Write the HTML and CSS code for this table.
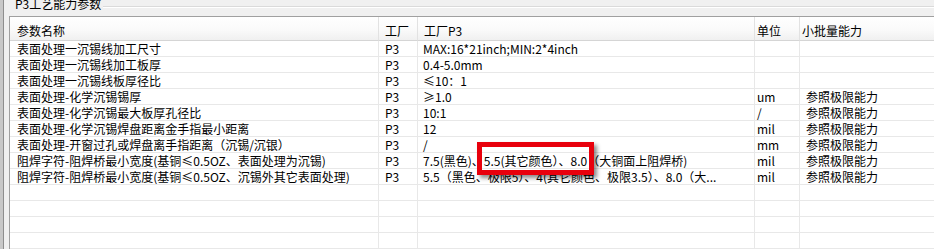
FILE: index.html
```html
<!DOCTYPE html>
<html lang="zh-CN">
<head>
<meta charset="utf-8">
<title>P3工艺能力参数</title>
<link rel="stylesheet" href="styles.css">
</head>
<body>
<div class="window">
  <div class="edge"></div>
  <div class="panel">
    <div class="legend">
      <span class="legend-text">P3工艺能力参数</span>
      <span class="legend-line"></span>
    </div>
    <div class="table-box">
      <div class="grid">
        <div class="hd c1">参数名称</div>
        <div class="hd c2">工厂</div>
        <div class="hd c3">工厂P3</div>
        <div class="hd c4">单位</div>
        <div class="hd c5">小批量能力</div>

        <div class="cell c1">表面处理一沉锡线加工尺寸</div>
        <div class="cell c2">P3</div>
        <div class="cell c3">MAX:16*21inch;MIN:2*4inch</div>
        <div class="cell c4"></div>
        <div class="cell c5"></div>

        <div class="cell c1">表面处理一沉锡线加工板厚</div>
        <div class="cell c2">P3</div>
        <div class="cell c3">0.4-5.0mm</div>
        <div class="cell c4"></div>
        <div class="cell c5"></div>

        <div class="cell c1">表面处理一沉锡线板厚径比</div>
        <div class="cell c2">P3</div>
        <div class="cell c3">≤10：1</div>
        <div class="cell c4"></div>
        <div class="cell c5"></div>

        <div class="cell c1">表面处理-化学沉锡锡厚</div>
        <div class="cell c2">P3</div>
        <div class="cell c3">≥1.0</div>
        <div class="cell c4">um</div>
        <div class="cell c5">参照极限能力</div>

        <div class="cell c1">表面处理-化学沉锡最大板厚孔径比</div>
        <div class="cell c2">P3</div>
        <div class="cell c3">10:1</div>
        <div class="cell c4">/</div>
        <div class="cell c5">参照极限能力</div>

        <div class="cell c1">表面处理-化学沉锡焊盘距离金手指最小距离</div>
        <div class="cell c2">P3</div>
        <div class="cell c3">12</div>
        <div class="cell c4">mil</div>
        <div class="cell c5">参照极限能力</div>

        <div class="cell c1">表面处理-开窗过孔或焊盘离手指距离（沉锡/沉银）</div>
        <div class="cell c2">P3</div>
        <div class="cell c3">/</div>
        <div class="cell c4">mm</div>
        <div class="cell c5">参照极限能力</div>

        <div class="cell c1">阻焊字符-阻焊桥最小宽度(基铜≤0.5OZ、表面处理为沉锡)</div>
        <div class="cell c2">P3</div>
        <div class="cell c3">7.5(黑色)、5.5(其它颜色）、8.0（大铜面上阻焊桥)</div>
        <div class="cell c4">mil</div>
        <div class="cell c5">参照极限能力</div>

        <div class="cell c1">阻焊字符-阻焊桥最小宽度(基铜≤0.5OZ、沉锡外其它表面处理)</div>
        <div class="cell c2">P3</div>
        <div class="cell c3">5.5（黑色、极限5）、4(其它颜色、极限3.5）、8.0（大...</div>
        <div class="cell c4">mil</div>
        <div class="cell c5">参照极限能力</div>

        <div class="cell c1"></div><div class="cell c2"></div><div class="cell c3"></div><div class="cell c4"></div><div class="cell c5"></div>
        <div class="cell c1"></div><div class="cell c2"></div><div class="cell c3"></div><div class="cell c4"></div><div class="cell c5"></div>
        <div class="cell c1"></div><div class="cell c2"></div><div class="cell c3"></div><div class="cell c4"></div><div class="cell c5"></div>
        <div class="cell c1"></div><div class="cell c2"></div><div class="cell c3"></div><div class="cell c4"></div><div class="cell c5"></div>
      </div>
    </div>
  </div>
  <div class="highlight"></div>
</div>
</body>
</html>
```

FILE: styles.css
```css
html, body {
  margin: 0;
  padding: 0;
  background: #f0f0f0;
}

body {
  font-family: "Noto Sans CJK SC", "Noto Sans", sans-serif;
  font-size: 12px;
  color: #000;
}

.window {
  position: relative;
  display: flex;
  width: 934px;
  height: 249px;
  overflow: hidden;
  background: #f0f0f0;
}

.edge {
  width: 3px;
  flex: none;
  background: #c8c8c8;
  border-right: 1px solid #8e8e8e;
}

.panel {
  flex: 1;
  min-width: 0;
  display: flex;
  flex-direction: column;
  padding-left: 5px;
}

.legend {
  height: 16px;
  flex: none;
  display: flex;
  align-items: flex-start;
  padding-left: 6px;
}

.legend-text {
  line-height: 12px;
  margin-top: -2px;
  white-space: nowrap;
}

.legend-line {
  flex: 1;
  margin-top: 6px;
  margin-left: 2px;
  border-top: 1px solid #dadada;
  border-bottom: 1px solid #ffffff;
}

.table-box {
  flex: 1;
  background: #ffffff;
  border-top: 1px solid #a0a0a0;
  border-left: 1px solid #a0a0a0;
  overflow: hidden;
}

.grid {
  display: grid;
  grid-template-columns: 369px 39px 337px 45px 1fr;
  grid-template-rows: 24px;
  grid-auto-rows: 16px;
}

.hd {
  height: 24px;
  box-sizing: border-box;
  padding: 7px 0 0 6px;
  line-height: 14px;
  white-space: nowrap;
  background: linear-gradient(#ffffff 0%, #fafafa 55%, #f0f0f0 100%);
  border-bottom: 1px solid #d5d5d5;
  border-right: 1px solid #e2e2e2;
}

.hd.c1 { padding-left: 7px; }
.hd.c3 { padding-left: 6px; }
.hd.c4 { padding-left: 2px; }
.hd.c5 { padding-left: 2px; border-right: none; }

.cell {
  box-sizing: border-box;
  height: 16px;
  line-height: 15px;
  padding-left: 6px;
  white-space: nowrap;
  overflow: hidden;
  border-bottom: 1px solid #e8e8e8;
  border-right: 1px solid #e8e8e8;
}

.cell.c1 { padding-left: 7px; }
.cell.c3 { padding-left: 5px; }
.cell.c4 { padding-left: 2px; }
.cell.c5 { padding-left: 6px; border-right: none; }

.highlight {
  position: absolute;
  left: 477px;
  top: 142px;
  width: 117px;
  height: 33px;
  box-sizing: border-box;
  border: 5px solid #e8000c;
  box-shadow: 3px 3px 4px rgba(0, 0, 0, 0.45);
}
```
